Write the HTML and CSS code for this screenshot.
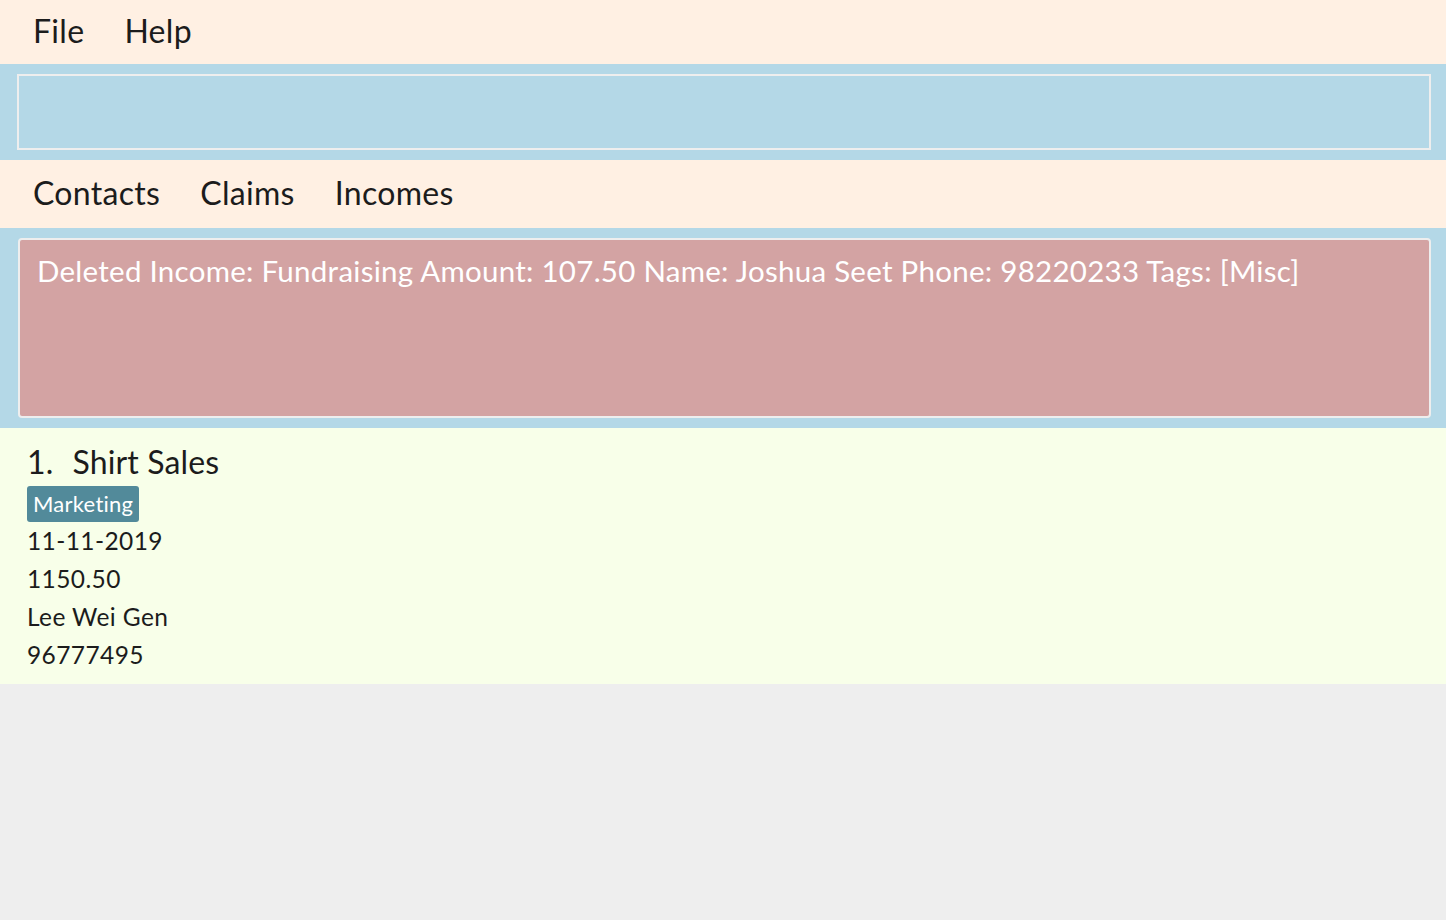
FILE: index.html
```html
<!DOCTYPE html>
<html>
<head>
<meta charset="utf-8">
<link rel="stylesheet" href="styles.css">
</head>
<body>
<div class="app">
  <div class="menubar">
    <span class="menu-item">File</span>
    <span class="menu-item">Help</span>
  </div>
  <div class="command-pane">
    <div class="command-box"></div>
  </div>
  <div class="tabbar">
    <span class="tab">Contacts</span>
    <span class="tab">Claims</span>
    <span class="tab">Incomes</span>
  </div>
  <div class="result-pane">
    <div class="result-box">Deleted Income: Fundraising Amount: 107.50 Name: Joshua Seet Phone: 98220233 Tags: [Misc]</div>
  </div>
  <div class="list">
    <div class="card">
      <div class="card-title"><span class="idx">1.</span><span>Shirt Sales</span></div>
      <div class="tags"><span class="tag">Marketing</span></div>
      <div class="field">11-11-2019</div>
      <div class="field">1150.50</div>
      <div class="field">Lee Wei Gen</div>
      <div class="field">96777495</div>
    </div>
  </div>
</div>
</body>
</html>
```
FILE: styles.css
```css
html, body {
  margin: 0;
  padding: 0;
  height: 100%;
}
body {
  background: #eeeeee;
  font-family: Lato, "Noto Sans", sans-serif;
  color: #1c1c1c;
}
.app {
  display: flex;
  flex-direction: column;
}
.menubar {
  height: 64px;
  background: #fff0e3;
  display: flex;
  align-items: center;
  padding-left: 33px;
  gap: 40px;
  box-sizing: border-box;
}
.menu-item {
  font-size: 32px;
  letter-spacing: 0.3px;
  line-height: 1;
  margin-top: -2px;
}
.command-pane {
  background: #b4d8e7;
  height: 96px;
  padding: 10px 15px 10px 17px;
  box-sizing: border-box;
}
.command-box {
  height: 100%;
  border: 2px solid #eeeeee;
  box-sizing: border-box;
}
.tabbar {
  height: 68px;
  background: #fff0e3;
  display: flex;
  align-items: center;
  padding-left: 33px;
  gap: 40px;
  box-sizing: border-box;
}
.tab {
  font-size: 32px;
  letter-spacing: 0.3px;
  line-height: 1;
  margin-top: -2px;
}
.result-pane {
  background: #b4d8e7;
  height: 200px;
  padding: 10px 15px 10px 18px;
  box-sizing: border-box;
}
.result-box {
  height: 100%;
  box-sizing: border-box;
  background: #d3a3a3;
  border: 2px solid #eeeeee;
  border-radius: 4px;
  color: #ffffff;
  font-size: 29.5px;
  letter-spacing: 0.27px;
  line-height: 1;
  padding: 16px 17px;
}
.list {
  background: #f8ffe9;
  height: 256px;
  box-sizing: border-box;
  padding: 18px 27px 0;
}
.card-title {
  font-size: 32px;
  letter-spacing: 0.15px;
  line-height: 1;
  display: flex;
  gap: 19px;
  height: 39px;
}
.tags {
  display: flex;
  height: 36px;
  margin-top: 1px;
}
.tag {
  background: #528a9a;
  color: #ffffff;
  font-size: 22px;
  letter-spacing: 0.25px;
  line-height: 35px;
  padding: 0 6px;
  border-radius: 3px;
}
.field {
  font-size: 24.5px;
  letter-spacing: 0.4px;
  line-height: 38px;
}
```
